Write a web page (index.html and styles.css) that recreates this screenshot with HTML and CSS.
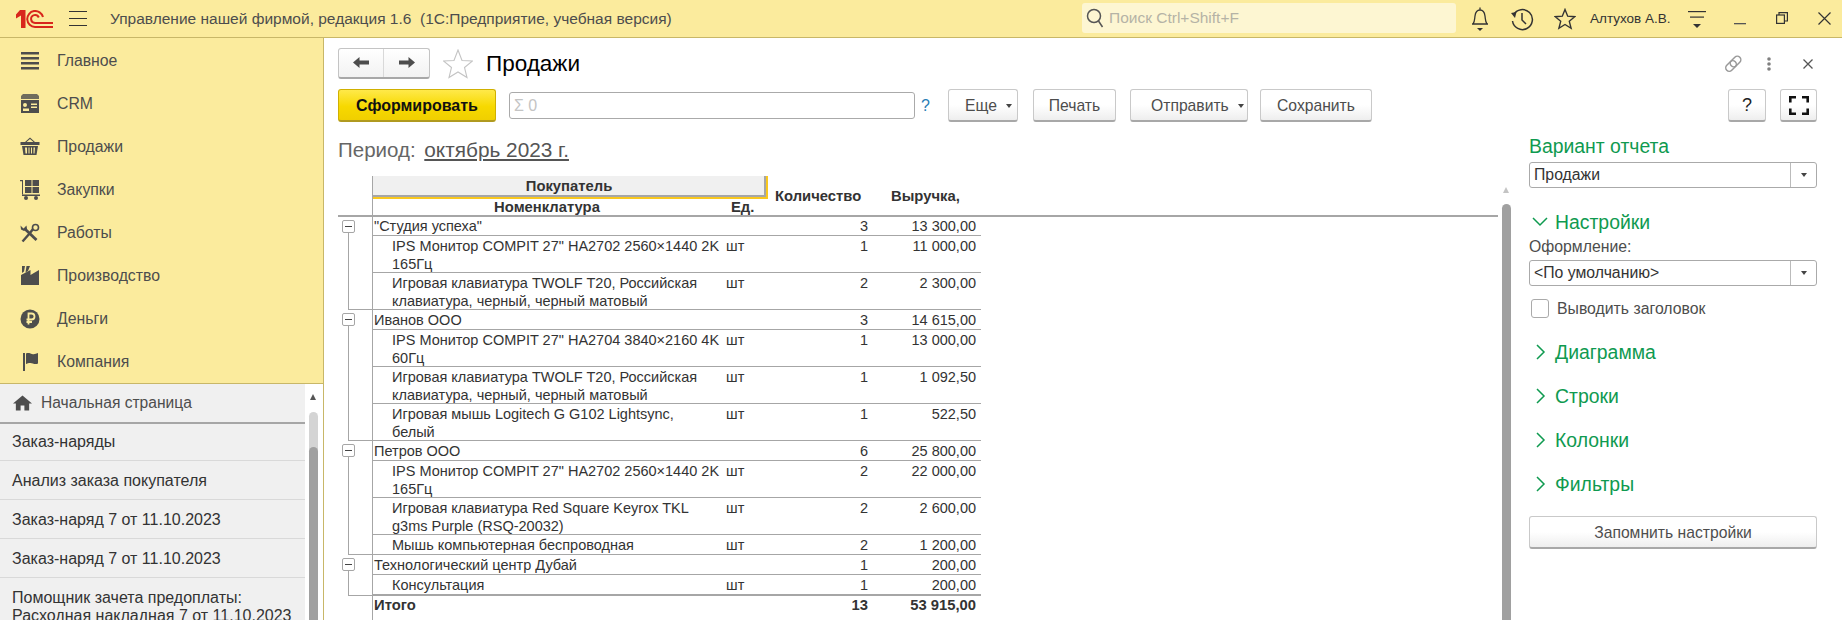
FILE: index.html
```html
<!DOCTYPE html>
<html lang="ru">
<head>
    <meta charset="UTF-8">
    <title>Продажи</title>
    <link rel="stylesheet" href="styles.css">
</head>
<body>
    <header class="topbar">
        <svg class="logo" viewBox="0 0 37 18" width="37" height="18" fill="none" stroke="#d8261c" stroke-width="2">
            <path d="M0 4.500 4 0H9.500V18H5V5.500L0 8.500Z" fill="#d8261c" stroke="none"/>
            <path d="M27 7A8 8 0 1 0 19 17H37"/>
            <path d="M22.800 7.500A4 4 0 1 0 19 13H37"/>
        </svg>
        <div class="burger"><span></span><span></span><span></span></div>
        <div class="app-title">Управление нашей фирмой, редакция 1.6&nbsp; (1С:Предприятие, учебная версия)</div>
        <div class="search">
            <svg viewBox="0 0 18 20" width="18" height="20" fill="none" stroke="#555" stroke-width="1.500">
                <circle cx="8" cy="8" r="6.500"/><path d="M12.500 13 16.500 19"/>
            </svg>
            <span>Поиск Ctrl+Shift+F</span>
        </div>
        <div class="top-icons">
            <svg class="ic-bell" viewBox="0 0 20 26" width="20" height="26" fill="none" stroke="#333" stroke-width="1.300">
                <path d="M10 1.500V4M3 18C5 15 4.500 13 5 10 5.500 6 7.500 4 10 4S14.500 6 15 10C15.500 13 15 15 17 18ZM2 18H18"/>
                <path d="M7 22H13L10 25Z" fill="#333" stroke="none"/>
            </svg>
            <svg class="ic-hist" viewBox="0 0 24 24" width="24" height="24" fill="none" stroke="#333" stroke-width="1.500">
                <path d="M3.500 8A10 10 0 1 1 2.500 14M12 6V13L16 17"/>
                <path d="M1 6 6.500 5 5 11Z" fill="#333" stroke="none"/>
            </svg>
            <svg class="ic-star" viewBox="0 0 22 22" width="22" height="22" fill="none" stroke="#333" stroke-width="1.400">
                <path d="M11 1.500 13.700 8.200 20.800 8.700 15.300 13.300 17.100 20.300 11 16.500 4.900 20.300 6.700 13.300 1.200 8.700 8.300 8.200Z"/>
            </svg>
            <span class="user">Алтухов А.В.</span>
            <svg class="ic-menu" viewBox="0 0 18 17" width="18" height="17" fill="#333">
                <rect y="0" width="18" height="1.200"/><rect x="2" y="5.500" width="14" height="1.200"/>
                <path d="M5 13H13L9 17Z"/>
            </svg>
            <svg class="ic-min" viewBox="0 0 12 12" width="12" height="12" fill="#555"><rect y="10" width="12" height="1.300"/></svg>
            <svg class="ic-rest" viewBox="0 0 12 12" width="12" height="12" fill="none" stroke="#333" stroke-width="1.200">
                <rect x="0.600" y="3" width="7.800" height="8.400"/><path d="M3 3V0.600H11.400V9H8.400"/>
            </svg>
            <svg class="ic-close" viewBox="0 0 13 13" width="13" height="13" fill="none" stroke="#333" stroke-width="1.200"><path d="M0.500 0.500 12.500 12.500M12.500 0.500 0.500 12.500"/></svg>
        </div>
    </header>

    <div class="main">
        <aside class="sidebar">
            <nav class="nav">
                <a class="nav-item">
                    <svg viewBox="0 0 20 18" width="20" height="18" fill="#4d4d4d"><rect x="1" y="0" width="18" height="2.500"/><rect x="1" y="5" width="18" height="2.500"/><rect x="1" y="10" width="18" height="2.500"/><rect x="1" y="15" width="18" height="2.500"/></svg>
                    Главное
                </a>
                <a class="nav-item">
                    <svg viewBox="0 0 20 20" width="20" height="20" fill="#4d4d4d"><path d="M3 0H17L19 2V5H1V2Z" opacity=".8"/><path fill-rule="evenodd" d="M1 6H19V19H1ZM5 9A2 2 0 0 0 5 13 2 2 0 0 0 5 9ZM11 9.500V11H17V9.500ZM11 12.500V14H17V12.500ZM3 17H9V14.500H3Z"/></svg>
                    CRM
                </a>
                <a class="nav-item">
                    <svg viewBox="0 0 20 20" width="20" height="20" fill="#4d4d4d"><path d="M10 0.500 15 5H13.500L10 2 6.500 5H5Z"/><rect x="0.500" y="5" width="19" height="3"/><path fill-rule="evenodd" d="M2 9H18L16.500 18H3.500ZM5 10.500 5.500 16.500H7V10.500ZM8.500 10.500V16.500H9.500V10.500ZM11 10.500V16.500H12V10.500ZM13.500 10.500V16.500H14.500L15 10.500Z"/></svg>
                    Продажи
                </a>
                <a class="nav-item">
                    <svg viewBox="0 0 20 20" width="20" height="20" fill="#4d4d4d"><path d="M0 0H3V14.500H2V1.200H0Z"/><rect x="5" y="0" width="6.500" height="6"/><rect x="12.500" y="0" width="6.500" height="6"/><rect x="5" y="7" width="6.500" height="6"/><rect x="12.500" y="7" width="6.500" height="6"/><rect x="2" y="14.500" width="18" height="1.500"/><circle cx="6" cy="18" r="2"/><circle cx="16" cy="18" r="2"/></svg>
                    Закупки
                </a>
                <a class="nav-item">
                    <svg viewBox="0 0 20 20" width="20" height="20" fill="none" stroke="#4d4d4d"><path d="M2.500 18.500 10 10 13 6" stroke-width="2.400"/><path d="M5 6 16.500 17" stroke-width="2.800"/><path d="M0.500 2.500 3.500 5.500 6.500 2.500 7 6 4 8 1 6.500Z" fill="#4d4d4d" stroke="none"/><circle cx="15.500" cy="4.500" r="3" stroke-width="1.600"/></svg>
                    Работы
                </a>
                <a class="nav-item">
                    <svg viewBox="0 0 20 20" width="20" height="20" fill="#4d4d4d"><path d="M2 0H5L4 5.500 2 7ZM6.500 0H10L8 5 5.500 6.500Z"/><path d="M1 19V9L10.500 4V9L19 4V19Z"/></svg>
                    Производство
                </a>
                <a class="nav-item">
                    <svg viewBox="0 0 20 20" width="20" height="20"><circle cx="10" cy="10" r="9.500" fill="#4d4d4d"/><path d="M8.500 15.500V4.500H11.500A3 3 0 0 1 11.500 10.500H6.500M6.500 13H12" fill="none" stroke="#fbeb9d" stroke-width="1.800"/></svg>
                    Деньги
                </a>
                <a class="nav-item">
                    <svg viewBox="0 0 20 20" width="20" height="20" fill="#4d4d4d"><rect x="3" y="1" width="2" height="18"/><path d="M6 1.500C8.500 0.500 10 1.500 12 2 14 2.500 16 2 18 1V11.500C15 13 12.500 11 10.500 11 8.500 11 7 11.500 6 12Z"/></svg>
                    Компания
                </a>
            </nav>
            <div class="open-list">
                <div class="open-items">
                    <div class="home-tab">
                        <svg viewBox="0 0 20 16" width="19" height="16" fill="#4d4d4d"><path d="M10 0 20 8.500H17V16H12V10.500H8V16H3V8.500H0Z"/></svg>
                        Начальная страница
                    </div>
                    <div class="open-item">Заказ-наряды</div>
                    <div class="open-item">Анализ заказа покупателя</div>
                    <div class="open-item">Заказ-наряд 7 от 11.10.2023</div>
                    <div class="open-item">Заказ-наряд 7 от 11.10.2023</div>
                    <div class="open-item">Помощник зачета предоплаты:<br>Расходная накладная 7 от 11.10.2023</div>
                </div>
                <div class="side-scroll">
                    <span class="arrow-up"></span>
                    <div class="side-track"><div class="side-thumb"></div></div>
                </div>
            </div>
        </aside>

        <section class="content">
            <div class="form-head">
                <div class="nav-buttons">
                    <button class="nav-btn"><svg viewBox="0 0 16 11" width="16" height="11" fill="#4d4d4d"><path d="M0 5.500 6.500 0V3.500H16V7.500H6.500V11Z"/></svg></button>
                    <button class="nav-btn"><svg viewBox="0 0 16 11" width="16" height="11" fill="#4d4d4d"><path d="M16 5.500 9.500 0V3.500H0V7.500H9.500V11Z"/></svg></button>
                </div>
                <svg class="fav" viewBox="0 0 30 30" width="30" height="30" fill="#fff" stroke="#c4c4c4" stroke-width="1.100">
                    <path d="M15 1 19 11.500 29.500 12 21.500 18.500 24 28.500 15 23 6 28.500 8.500 18.500 0.500 12 11 11.500Z"/>
                </svg>
                <h1 class="form-title">Продажи</h1>
                <div class="form-tools">
                    <svg class="tool-link" viewBox="0 0 20 20" width="20" height="20" fill="none" stroke="#999" stroke-width="1.500">
                        <rect x="-1" y="-3.500" width="12" height="7" rx="3.500" transform="translate(5.500 14.500) rotate(-45)"/>
                        <rect x="-1" y="-3.500" width="12" height="7" rx="3.500" transform="translate(10 10) rotate(-45)"/>
                    </svg>
                    <svg class="tool-dots" viewBox="0 0 4 14" width="4" height="14" fill="#808080"><circle cx="2" cy="2" r="1.800"/><circle cx="2" cy="7" r="1.800"/><circle cx="2" cy="12" r="1.800"/></svg>
                    <svg class="tool-close" viewBox="0 0 10 10" width="10" height="10" fill="none" stroke="#555" stroke-width="1.300"><path d="M0.500 0.500 9.500 9.500M9.500 0.500 0.500 9.500"/></svg>
                </div>
            </div>

            <div class="toolbar">
                <button class="btn btn-main">Сформировать</button>
                <div class="sum-field">Σ 0</div>
                <span class="hint">?</span>
                <button class="btn btn-more">Еще <i class="caret"></i></button>
                <button class="btn btn-print">Печать</button>
                <button class="btn btn-send">Отправить <i class="caret"></i></button>
                <button class="btn btn-save">Сохранить</button>
                <div class="spacer"></div>
                <button class="btn btn-help">?</button>
                <button class="btn btn-full">
                    <svg viewBox="0 0 20 19" width="20" height="19" fill="none" stroke="#111" stroke-width="2.600"><path d="M1.300 6.500V1.300H7M13 1.300H18.700V6.500M18.700 12.500V17.700H13M7 17.700H1.300V12.500"/></svg>
                </button>
            </div>

            <div class="work">
                <div class="report">
                    <div class="period">Период: <a class="period-link">октябрь 2023 г.</a></div>
                    <div class="sheet">
                        <table class="grid">
                            <colgroup>
                                <col class="c-tree"><col class="c-name"><col class="c-unit"><col class="c-qty"><col class="c-sum"><col>
                            </colgroup>
                            <thead>
                                <tr>
                                    <th class="h-line" rowspan="2"></th>
                                    <th class="h-group" colspan="2"><div>Покупатель</div></th>
                                    <th class="h-line h-qty" rowspan="2">Количество</th>
                                    <th class="h-line h-sum" rowspan="2">Выручка,</th>
                                    <th class="h-line" rowspan="2"></th>
                                </tr>
                                <tr>
                                    <th class="h-line h-name">Номенклатура</th>
                                    <th class="h-line h-unit">Ед.</th>
                                </tr>
                            </thead>
                            <tbody>
                                <tr class="r-first">
                                    <td class="tree" rowspan="3"><i class="box"></i><i class="branch"></i></td>
                                    <td colspan="2">"Студия успеха"</td><td class="num">3</td><td class="num num-sum">13 300,00</td>
                                </tr>
                                <tr>
                                    <td class="name">IPS Монитор COMPIT 27" HA2702 2560×1440 2K 165Гц</td><td class="unit">шт</td><td class="num">1</td><td class="num num-sum">11 000,00</td>
                                </tr>
                                <tr>
                                    <td class="name">Игровая клавиатура TWOLF T20, Российская клавиатура, черный, черный матовый</td><td class="unit">шт</td><td class="num">2</td><td class="num num-sum">2 300,00</td>
                                </tr>
                                <tr>
                                    <td class="tree" rowspan="4"><i class="box"></i><i class="branch"></i></td>
                                    <td colspan="2">Иванов ООО</td><td class="num">3</td><td class="num num-sum">14 615,00</td>
                                </tr>
                                <tr>
                                    <td class="name">IPS Монитор COMPIT 27" HA2704 3840×2160 4K 60Гц</td><td class="unit">шт</td><td class="num">1</td><td class="num num-sum">13 000,00</td>
                                </tr>
                                <tr>
                                    <td class="name">Игровая клавиатура TWOLF T20, Российская клавиатура, черный, черный матовый</td><td class="unit">шт</td><td class="num">1</td><td class="num num-sum">1 092,50</td>
                                </tr>
                                <tr>
                                    <td class="name">Игровая мышь Logitech G G102 Lightsync,<br>белый</td><td class="unit">шт</td><td class="num">1</td><td class="num num-sum">522,50</td>
                                </tr>
                                <tr>
                                    <td class="tree" rowspan="4"><i class="box"></i><i class="branch"></i></td>
                                    <td colspan="2">Петров ООО</td><td class="num">6</td><td class="num num-sum">25 800,00</td>
                                </tr>
                                <tr>
                                    <td class="name">IPS Монитор COMPIT 27" HA2702 2560×1440 2K 165Гц</td><td class="unit">шт</td><td class="num">2</td><td class="num num-sum">22 000,00</td>
                                </tr>
                                <tr>
                                    <td class="name">Игровая клавиатура Red Square Keyrox TKL g3ms Purple (RSQ-20032)</td><td class="unit">шт</td><td class="num">2</td><td class="num num-sum">2 600,00</td>
                                </tr>
                                <tr>
                                    <td class="name">Мышь компьютерная беспроводная</td><td class="unit">шт</td><td class="num">2</td><td class="num num-sum">1 200,00</td>
                                </tr>
                                <tr>
                                    <td class="tree" rowspan="2"><i class="box"></i><i class="branch"></i></td>
                                    <td colspan="2">Технологический центр Дубай</td><td class="num">1</td><td class="num num-sum">200,00</td>
                                </tr>
                                <tr class="r-last">
                                    <td class="name">Консультация</td><td class="unit">шт</td><td class="num">1</td><td class="num num-sum">200,00</td>
                                </tr>
                                <tr class="r-total">
                                    <td class="tree"></td>
                                    <td colspan="2">Итого</td><td class="num">13</td><td class="num num-sum">53 915,00</td>
                                </tr>
                            </tbody>
                        </table>
                        <div class="grid-line"></div>
                        <div class="sheet-scroll">
                            <span class="arrow-up arrow-light"></span>
                            <div class="sheet-thumb"></div>
                        </div>
                    </div>
                </div>

                <aside class="settings">
                    <div class="set-title">Вариант отчета</div>
                    <div class="select"><span>Продажи</span><b><i class="caret"></i></b></div>
                    <div class="set-head set-open">
                        <svg viewBox="0 0 16 10" width="16" height="10" fill="none" stroke="#0f9a50" stroke-width="1.500"><path d="M1 1 8 8 15 1"/></svg>
                        Настройки
                    </div>
                    <div class="set-label">Оформление:</div>
                    <div class="select select-sub"><span>&lt;По умолчанию&gt;</span><b><i class="caret"></i></b></div>
                    <label class="check"><i></i>Выводить заголовок</label>
                    <div class="set-head">
                        <svg viewBox="0 0 16 16" width="16" height="16" fill="none" stroke="#0f9a50" stroke-width="1.500"><path d="M5 1 12 8 5 15"/></svg>
                        Диаграмма
                    </div>
                    <div class="set-head">
                        <svg viewBox="0 0 16 16" width="16" height="16" fill="none" stroke="#0f9a50" stroke-width="1.500"><path d="M5 1 12 8 5 15"/></svg>
                        Строки
                    </div>
                    <div class="set-head">
                        <svg viewBox="0 0 16 16" width="16" height="16" fill="none" stroke="#0f9a50" stroke-width="1.500"><path d="M5 1 12 8 5 15"/></svg>
                        Колонки
                    </div>
                    <div class="set-head">
                        <svg viewBox="0 0 16 16" width="16" height="16" fill="none" stroke="#0f9a50" stroke-width="1.500"><path d="M5 1 12 8 5 15"/></svg>
                        Фильтры
                    </div>
                    <button class="btn btn-remember">Запомнить настройки</button>
                </aside>
            </div>
        </section>
    </div>
</body>
</html>
```

FILE: styles.css
```css
* {
    box-sizing: border-box;
}

body {
    margin: 0;
    height: 620px;
    overflow: hidden;
    background-color: #fff;
    color: #333;
    font-family: "Liberation Sans", Arial, sans-serif;
    font-size: 15.800px;
    display: flex;
    flex-direction: column;
}

/* top bar */
.topbar {
    height: 38px;
    flex: none;
    display: flex;
    align-items: center;
    background-color: #fbeb9d;
    border-bottom: 1px solid #c8b768;
    padding-left: 16px;
}

.logo {
    flex: none;
}

.burger {
    width: 18px;
    margin-left: 16px;
    display: flex;
    flex-direction: column;
    gap: 5.500px;
}

.burger span {
    height: 1.200px;
    background-color: #333;
}

.app-title {
    margin-left: 23px;
    width: 972px;
    color: #4d4d4d;
    font-size: 15.500px;
    white-space: nowrap;
}

.search {
    width: 374px;
    height: 30px;
    margin-top: -1px;
    padding-left: 4px;
    display: flex;
    align-items: center;
    gap: 5px;
    background-color: #fdf6d2;
    border-radius: 3px;
    color: #b5b3a6;
    font-size: 15.500px;
}

.top-icons {
    display: flex;
    align-items: center;
    margin-left: 14px;
}

.ic-hist,
.ic-star {
    margin-left: 20px;
}

.user {
    margin-left: 14px;
    color: #333;
    font-size: 13.500px;
    white-space: nowrap;
}

.ic-menu {
    margin-left: 17px;
    margin-top: 2px;
}

.ic-min {
    margin-left: 28px;
}

.ic-rest {
    margin-left: 30px;
    margin-top: -1px;
}

.ic-close {
    margin-left: 30px;
    margin-top: -1px;
}

.main {
    flex: 1;
    display: flex;
    min-height: 0;
}

/* left panel */
.sidebar {
    width: 324px;
    flex: none;
    display: flex;
    flex-direction: column;
    border-right: 1px solid #c8b768;
    background-color: #fbeb9d;
}

.nav {
    height: 346px;
    flex: none;
    padding-top: 1px;
    border-bottom: 1px solid #c8b768;
}

.nav-item {
    height: 43px;
    display: flex;
    align-items: center;
    padding-left: 20px;
    gap: 17px;
    color: #4d4d4d;
}

.nav-item svg {
    flex: none;
}

.open-list {
    flex: 1;
    display: flex;
    min-height: 0;
    overflow: hidden;
    background-color: #fff;
}

.open-items {
    width: 305px;
    flex: none;
    background-color: #f0f0f0;
    font-size: 16px;
    color: #333;
}

.home-tab {
    height: 40px;
    display: flex;
    align-items: center;
    gap: 9px;
    padding-left: 13px;
    font-size: 15.600px;
    color: #4d4d4d;
    border-bottom: 2px solid #a6a6a6;
}

.open-item {
    padding: 11px 12px 9px;
    line-height: 18px;
    border-bottom: 1px solid #d9d9d9;
    white-space: nowrap;
}

.home-tab + .open-item {
    padding-top: 9px;
}

.side-scroll {
    flex: 1;
    position: relative;
}

.arrow-up {
    position: absolute;
    top: 10px;
    left: 5px;
    border-left: 3.500px solid transparent;
    border-right: 3.500px solid transparent;
    border-bottom: 6px solid #555;
}

.side-track {
    margin: 28px 0 0 4px;
    width: 9px;
    height: 208px;
    padding-top: 35px;
    background-color: #d4d4d4;
    border-radius: 5px 5px 0 0;
}

.side-thumb {
    height: 100%;
    background-color: #a0a0a0;
    border-radius: 5px 5px 0 0;
}

/* form */
.content {
    flex: 1;
    min-width: 0;
    padding: 10px 25px 0 14px;
    display: flex;
    flex-direction: column;
}

.form-head {
    height: 31px;
    flex: none;
    display: flex;
    align-items: center;
}

.nav-buttons {
    width: 92px;
    height: 31px;
    display: flex;
    background: linear-gradient(#fff, #f2f2f2);
    border: 1px solid #c4c4c4;
    border-bottom: 2px solid #a8a8a8;
    border-radius: 3px;
}

.nav-btn {
    width: 46px;
    padding: 0;
    border: none;
    background: none;
    border-right: 1px solid #d9d9d9;
}

.nav-btn:last-child {
    border-right: none;
}

.fav {
    margin-left: 13px;
}

.form-title {
    margin: 0 0 0 13px;
    font-size: 22.500px;
    font-weight: normal;
    color: #000;
}

.form-tools {
    margin-left: auto;
    display: flex;
    align-items: center;
}

.tool-dots {
    margin-left: 25px;
}

.tool-close {
    margin-left: 32px;
    margin-right: 4px;
}

.tool-link {
    margin-top: 2px;
}

.toolbar {
    height: 33px;
    flex: none;
    margin-top: 10px;
    display: flex;
    align-items: center;
}

.btn {
    height: 33px;
    padding: 1px 0 0;
    background: linear-gradient(#fff 50%, #eee);
    border: 1px solid #c9c9c9;
    border-bottom: 2px solid #a8a8a8;
    border-radius: 3px;
    color: #4d4d4d;
    font-family: inherit;
    font-size: 15.700px;
}

.btn-main {
    width: 158px;
    background: linear-gradient(#ffe94a, #f7d900 55%, #f0cf00);
    border-color: #d0b000;
    border-bottom-color: #b09a20;
    color: #111;
    font-size: 16px;
    font-weight: bold;
}

.sum-field {
    width: 406px;
    height: 27px;
    margin-left: 13px;
    padding-left: 4px;
    line-height: 25px;
    border: 1px solid #aaa;
    border-radius: 3px;
    color: #c4c4c4;
    font-size: 16px;
}

.hint {
    width: 10px;
    margin-left: 6px;
    color: #2a7db5;
    font-size: 16px;
}

.caret {
    display: inline-block;
    margin-left: 5px;
    vertical-align: middle;
    border-left: 3px solid transparent;
    border-right: 3px solid transparent;
    border-top: 4px solid #444;
}

.btn-more {
    width: 70px;
    margin-left: 17px;
    padding-left: 16px;
    text-align: left;
}

.btn-print {
    width: 83px;
    margin-left: 15px;
}

.btn-send {
    width: 118px;
    margin-left: 14px;
    padding-left: 20px;
    text-align: left;
}

.btn-save {
    width: 112px;
    margin-left: 12px;
}

.spacer {
    flex: 1;
}

.btn-help {
    width: 38px;
    color: #222;
    font-size: 18px;
}

.btn-full {
    width: 37px;
    margin-left: 14px;
    padding: 0;
    display: flex;
    align-items: center;
    justify-content: center;
}

/* report + settings */
.work {
    flex: 1;
    min-height: 0;
    display: flex;
}

.report {
    width: 1177px;
    flex: none;
    padding-top: 16px;
}

.period {
    height: 38px;
    font-size: 20.500px;
    color: #666;
    line-height: 24px;
}

.period-link {
    margin-left: 3px;
    font-size: 20.800px;
    color: #555;
    text-decoration: underline;
}

.sheet {
    position: relative;
    height: 444px;
    overflow: hidden;
}

.grid {
    width: 1160px;
    table-layout: fixed;
    border-collapse: separate;
    border-spacing: 0;
    font-size: 14.500px;
    color: #333;
}

.c-tree { width: 34px; }
.c-name { width: 350px; }
.c-unit { width: 46px; }
.c-qty { width: 103px; }
.c-sum { width: 110px; }

.grid th {
    padding: 0;
    font-size: 14.800px;
    font-weight: bold;
    color: #333;
}

.h-group {
    height: 23px;
}

.h-group div {
    height: 23px;
    line-height: 20px;
    background-color: #f0f0f0;
    border-right: 2px solid #f9c81e;
    border-bottom: 2px solid #f9c81e;
    box-shadow: inset -2px -2px 0 #a6a6a6;
}

.grid .h-line {
    border-bottom: 2px solid #a6a6a6;
}

.grid .h-name {
    height: 18px;
    line-height: 14px;
}

.grid .h-unit {
    line-height: 14px;
    text-align: left;
    padding-left: 9px;
}

.grid .h-qty {
    padding-left: 7px;
    text-align: left;
    white-space: nowrap;
}

.grid .h-sum {
    padding-left: 20px;
    text-align: left;
}

.grid td {
    padding: 1px 3px 0 2px;
    line-height: 18px;
    vertical-align: top;
    border-bottom: 1px solid #a6a6a6;
}

.grid .r-first td {
    padding-top: 0;
}

.grid .name {
    padding-left: 20px;
    padding-right: 0;
}

/* wrapped rows come out 1px lower than two single lines */
.grid .name::after {
    content: "";
    display: block;
    margin-top: -1px;
}

.grid .unit {
    padding-left: 4px;
}

.grid .num {
    text-align: right;
}

.grid .num-sum {
    padding-right: 5px;
}

.grid .tree {
    position: relative;
    padding: 0;
    border-bottom: none;
}

.box {
    position: absolute;
    top: 3px;
    left: 4px;
    width: 13px;
    height: 13px;
    background: #fff;
    border: 1px solid #a6a6a6;
    border-radius: 2px;
    z-index: 1;
}

.box::after {
    content: "";
    position: absolute;
    top: 5px;
    left: 2px;
    width: 7px;
    height: 1px;
    background-color: #444;
}

.branch {
    position: absolute;
    top: 10px;
    bottom: 0;
    left: 10px;
    right: 0;
    border-left: 1px solid #a6a6a6;
    border-bottom: 1px solid #a6a6a6;
}

.grid .r-last td {
    border-bottom: 2px solid #a6a6a6;
}

.grid .r-total td {
    padding-top: 0;
    border-bottom: none;
    font-weight: bold;
    font-size: 14.800px;
}

.grid-line {
    position: absolute;
    top: 0;
    bottom: 0;
    left: 34px;
    width: 1px;
    background-color: #a6a6a6;
}

.sheet-scroll {
    position: absolute;
    top: 0;
    right: 4px;
    bottom: 0;
    width: 9px;
}

.arrow-light {
    top: 11px;
    left: 1px;
    border-bottom-color: #c4c4c4;
}

.sheet-thumb {
    position: absolute;
    top: 28px;
    left: 0;
    right: 0;
    bottom: 0;
    background-color: #a0a0a0;
    border-radius: 5px 5px 0 0;
}

/* settings panel */
.settings {
    flex: 1;
    padding-top: 12px;
    padding-left: 14px;
}

.set-title {
    height: 28px;
    font-size: 19.400px;
    line-height: 24px;
    color: #0f9a50;
}

.select {
    height: 26px;
    display: flex;
    align-items: center;
    justify-content: space-between;
    border: 1px solid #aaa;
    border-radius: 3px;
    padding-left: 4px;
    color: #333;
}

.select-sub {
    margin-top: 3px;
}

.select b {
    width: 26px;
    height: 100%;
    display: flex;
    align-items: center;
    justify-content: center;
    border-left: 1px solid #bbb;
}

.select .caret {
    margin: 0;
}

.set-head {
    height: 24px;
    margin-top: 20px;
    display: flex;
    align-items: center;
    gap: 7px;
    padding-left: 3px;
    color: #0f9a50;
    font-size: 19.400px;
}

.set-open {
    margin-top: 22px;
}

.set-label {
    margin-top: 3px;
    height: 20px;
    color: #4d4d4d;
    line-height: 20px;
}

.check {
    display: flex;
    align-items: center;
    gap: 8px;
    height: 19px;
    margin: 13px 0 22px;
    padding-left: 2px;
    color: #4d4d4d;
}

.check i {
    width: 18px;
    height: 19px;
    background-color: #fff;
    border: 1px solid #aaa;
    border-radius: 3px;
}

.btn-remember {
    width: 100%;
    margin-top: 20px;
}
```
